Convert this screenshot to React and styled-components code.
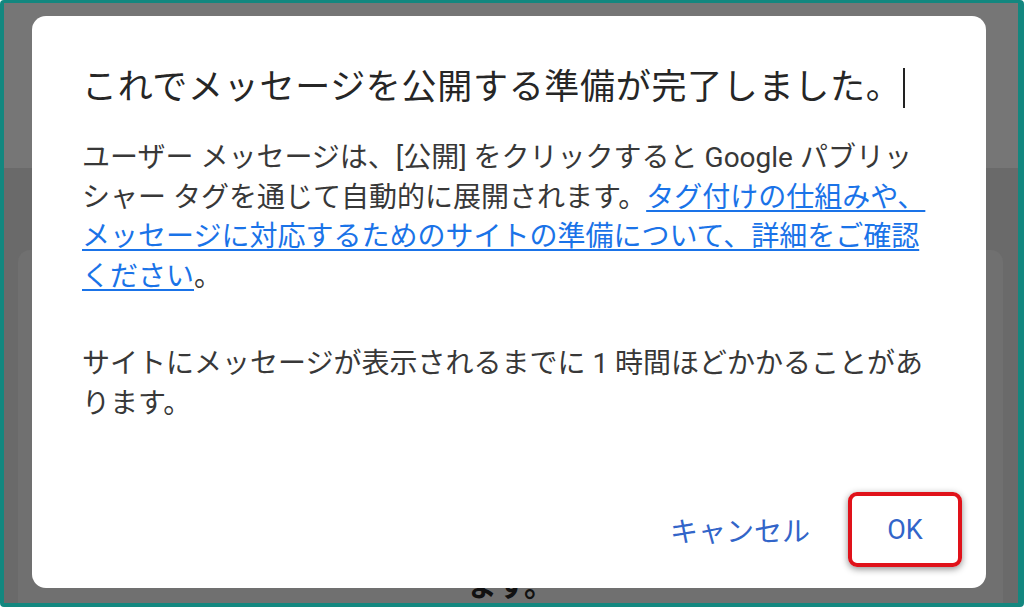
import React from "react";
import styled, { createGlobalStyle } from "styled-components";

const GlobalStyle = createGlobalStyle`
  html, body {
    margin: 0;
    padding: 0;
    background: #ffffff;
  }
  * {
    box-sizing: border-box;
  }
`;

const Frame = styled.div`
  position: relative;
  width: 1024px;
  height: 607px;
  border: 4px solid #13877f;
  border-top-width: 3px;
  border-right-width: 6px;
  border-radius: 4px;
  background: #6a6a6a;
  overflow: hidden;
  font-family: Roboto, "Noto Sans CJK JP", sans-serif;
`;

/* the page behind the overlay */
const Backdrop = styled.div`
  display: flex;
  flex-direction: column;
  height: 100%;
`;

const HeaderStrip = styled.div`
  height: 184px;
  background: #767676;
`;

const BackCard = styled.div`
  flex: 1;
  margin: 82px 15px 0 14px;
  padding-top: 313px;
  border-radius: 12px 12px 0 0;
  background: #707070;
  text-align: center;
`;

const BackText = styled.p`
  margin: 0;
  font-family: "Noto Sans CJK JP", sans-serif;
  font-size: 30px;
  font-weight: 700;
  line-height: 40px;
  color: #111;
`;

const Dialog = styled.div`
  position: absolute;
  left: 28px;
  top: 13px;
  width: 954px;
  height: 572px;
  display: flex;
  flex-direction: column;
  padding: 42px 24px 21px 50px;
  background: #ffffff;
  border-radius: 14px;
`;

const Title = styled.h2`
  margin: 0;
  font-family: "Noto Sans CJK JP", sans-serif;
  font-size: 35px;
  font-weight: 400;
  letter-spacing: 0.7px;
  line-height: 52px;
  color: #262626;
  white-space: nowrap;
`;

const Caret = styled.span`
  display: inline-block;
  width: 2px;
  height: 40px;
  margin-left: 2px;
  vertical-align: -9px;
  background: #222;
`;

const Body = styled.div`
  margin-top: 28px;
  margin-right: 26px;
  font-size: 28px;
  line-height: 39.5px;
  color: #383838;
`;

const Para = styled.p`
  margin: 0 0 ${(p) => p.gap || 0}px;
`;

const Link = styled.a`
  color: #1a73e8;
  text-decoration: underline;
  text-underline-offset: 3px;
  text-decoration-thickness: 1.5px;
`;

const Actions = styled.div`
  margin-top: auto;
  display: flex;
  justify-content: flex-end;
  align-items: center;
  gap: 38px;
`;

const TextButton = styled.button`
  border: none;
  background: transparent;
  padding: 0;
  font-family: Roboto, "Noto Sans CJK JP", sans-serif;
  font-size: 28px;
  color: #3265c9;
  cursor: pointer;
`;

const MarkedButton = styled(TextButton)`
  width: 114px;
  height: 75px;
  border: 4px solid #e0121a;
  border-radius: 9px;
  box-shadow: 0 2px 7px rgba(0, 0, 0, 0.45);
  font-size: 27px;
  padding-top: 1px;
`;

export default function App() {
  return (
    <>
      <GlobalStyle />
      <Frame>
        <Backdrop>
          <HeaderStrip />
          <BackCard>
            <BackText>ます。</BackText>
          </BackCard>
        </Backdrop>

        <Dialog>
          <Title>
            これでメッセージを公開する準備が完了しました。
            <Caret />
          </Title>
          <Body>
            <Para gap={48}>
              ユーザー メッセージは、[公開] をクリックすると Google パブリッシャー
              タグを通じて自動的に展開されます。
              <Link href="#">
                タグ付けの仕組みや、メッセージに対応するためのサイトの準備について、詳細をご確認ください
              </Link>
              。
            </Para>
            <Para>
              サイトにメッセージが表示されるまでに 1 時間ほどかかることがあります。
            </Para>
          </Body>
          <Actions>
            <TextButton>キャンセル</TextButton>
            <MarkedButton>OK</MarkedButton>
          </Actions>
        </Dialog>
      </Frame>
    </>
  );
}
